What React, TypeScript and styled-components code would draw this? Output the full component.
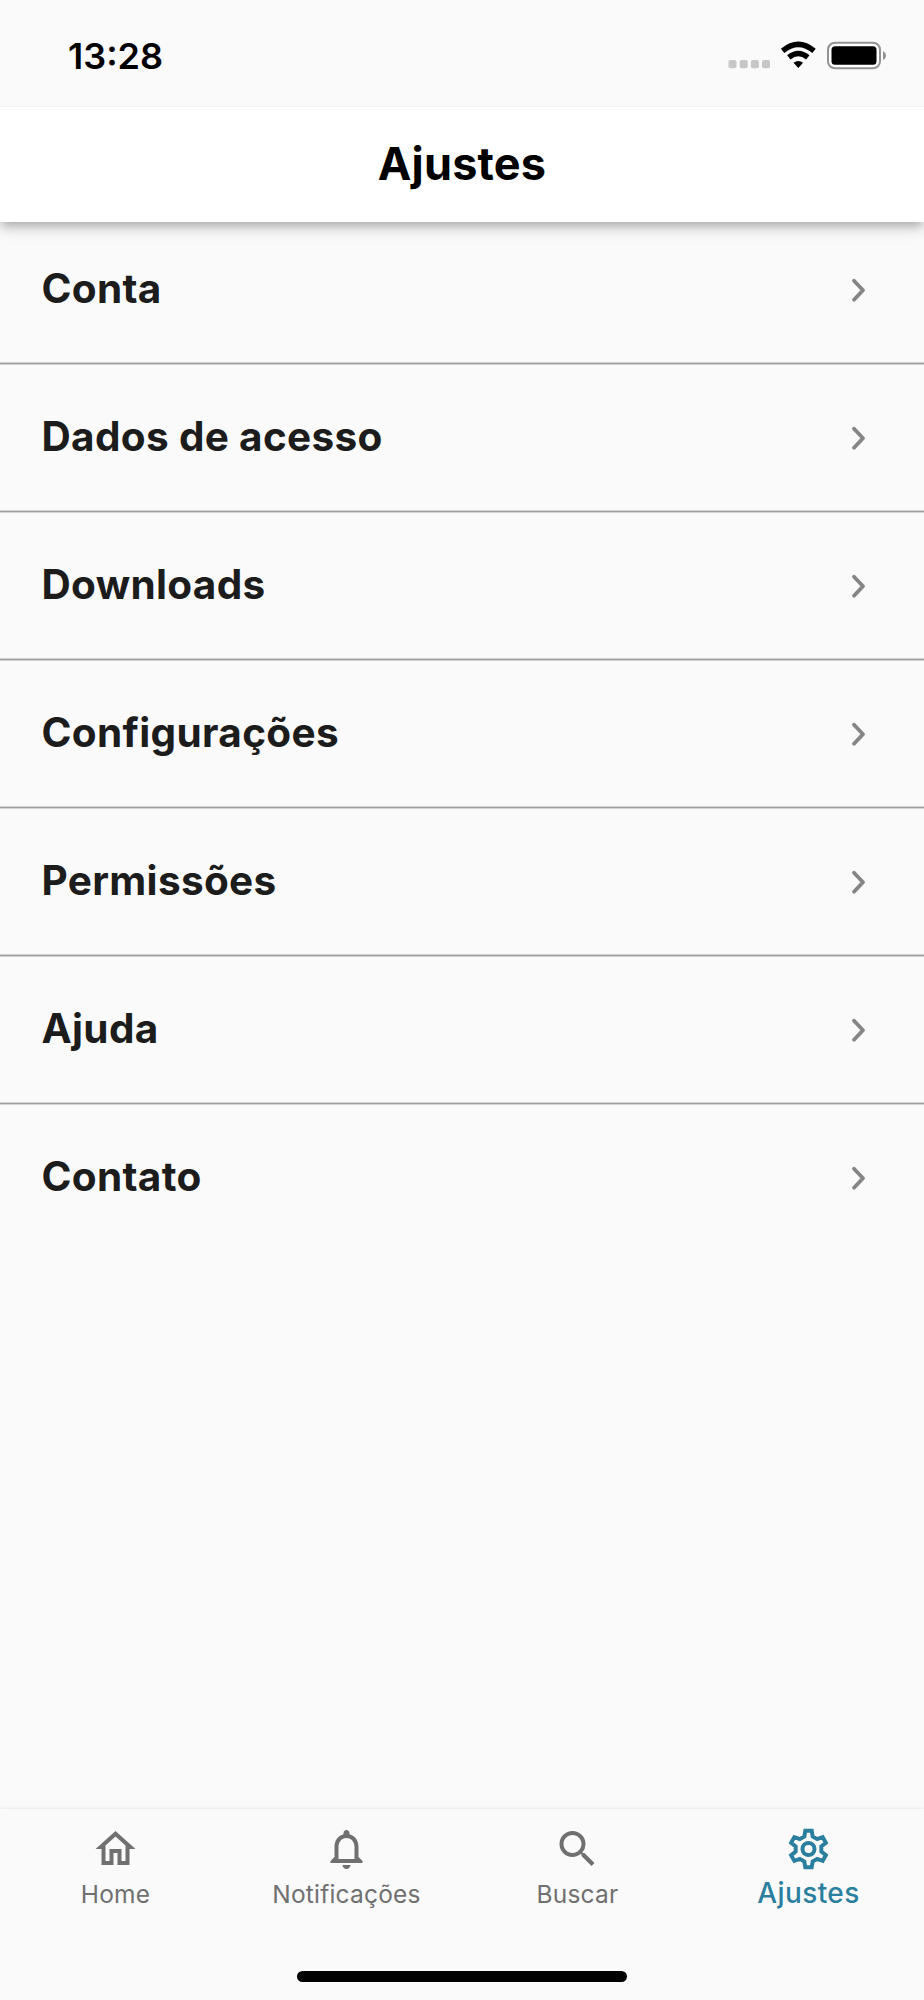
import React from 'react';
import styled, { createGlobalStyle } from 'styled-components';

const GlobalStyle = createGlobalStyle`
  * { box-sizing: border-box; }
  body { margin: 0; background: #fafafa; font-family: Inter, "Liberation Sans", sans-serif; }
`;

const Screen = styled.div`
  display: flex;
  flex-direction: column;
  width: 924px;
  height: 2000px;
  background: #fafafa;
  overflow: hidden;
`;

const StatusBar = styled.div`
  display: flex;
  align-items: center;
  justify-content: space-between;
  height: 107px;
  padding: 6px 38px 0 68px;
  border-bottom: 1px solid #f1f1f1;
`;

const Clock = styled.time`
  font-size: 36px;
  font-weight: 600;
  line-height: 44px;
  color: #000;
`;

const StatusIcons = styled.div`
  display: flex;
  align-items: center;
  padding-top: 1px;
`;

const Header = styled.header`
  position: relative;
  z-index: 1;
  display: flex;
  align-items: center;
  justify-content: center;
  height: 115px;
  padding-bottom: 2px;
  background: #fff;
  box-shadow: 0 5px 9px -2px rgba(0, 0, 0, 0.22), 0 8px 13px rgba(0, 0, 0, 0.13);
  clip-path: inset(0 0 -30px 0);
`;

const Title = styled.h1`
  margin: 0;
  font-size: 45px;
  font-weight: 700;
  line-height: 56px;
  letter-spacing: 0.2px;
  color: #000;
`;

const List = styled.ul`
  flex: 1;
  margin: -5px 0 0;
  padding: 0;
  list-style: none;
`;

const Row = styled.li`
  display: flex;
  align-items: center;
  justify-content: space-between;
  height: 148px;
  padding: 0 54px 3px 41.5px;

  &:not(:last-child) {
    background: linear-gradient(#d4d4d4 1px, #9c9c9c 1px 2px, #d4d4d4 2px) bottom / 100% 3px no-repeat;
  }
`;

const RowLabel = styled.span`
  padding-bottom: 1px;
  font-size: 40.5px;
  font-weight: 700;
  line-height: 50px;
  letter-spacing: 0.33px;
  color: #1c1c1c;
`;

const TabBar = styled.nav`
  display: flex;
  height: 191px;
  background: #fafafa;
  box-shadow: 0 -1px 3px rgba(0, 0, 0, 0.07);
`;

const Tab = styled.div`
  display: flex;
  flex: 1;
  flex-direction: column;
  align-items: center;
  height: 120px;
  padding-top: 16px;
  color: #707070;

  &[aria-current] { color: #2a7f9e; }

  svg { flex: none; }
`;

const TabLabel = styled.span<{ $active?: boolean }>`
  margin-top: ${(p) => (p.$active ? 3 : 4)}px;
  font-size: ${(p) => (p.$active ? 28 : 24.5)}px;
  font-weight: ${(p) => (p.$active ? 450 : 400)};
  line-height: 34px;
  letter-spacing: ${(p) => (p.$active ? 0.4 : 0.2)}px;
`;

const Bottom = styled.div`
  position: relative;
`;

const HomeIndicator = styled.div`
  position: absolute;
  bottom: 18px;
  left: 297px;
  width: 330px;
  height: 11px;
  border-radius: 6px;
  background: #000;
`;

const GLYPHS = {
  home: 'M12 5.69l5 4.5V18h-2v-6H9v6H7v-7.81l5-4.5M12 3L2 12h3v8h6v-6h2v6h6v-8h3L12 3z',
  bell: 'M12 22c1.1 0 2-.9 2-2h-4c0 1.1.9 2 2 2zm6-6v-5c0-3.07-1.63-5.64-4.5-6.32V4c0-.83-.67-1.5-1.5-1.5s-1.5.67-1.5 1.5v.68C7.64 5.36 6 7.92 6 11v5l-2 2v1h16v-1l-2-2zm-2 1H8v-6c0-2.48 1.51-4.5 4-4.5s4 2.02 4 4.5v6z',
  search:
    'M15.5 14h-.79l-.28-.27A6.471 6.471 0 0 0 16 9.5 6.5 6.5 0 1 0 9.5 16c1.61 0 3.09-.59 4.23-1.57l.27.28v.79l5 4.99L20.49 19l-4.99-5zm-6 0C7.01 14 5 11.99 5 9.5S7.01 5 9.5 5 14 7.01 14 9.5 11.99 14 9.5 14z',
};

const TOOTH = [
  [-2.1, -6.2],
  [-1.6, -9.1],
  [1.6, -9.1],
  [2.1, -6.2],
];

// Six copies of one tooth, turned by 60 degrees each, form the cog outline.
const COG_POINTS = [0, 1, 2, 3, 4, 5]
  .flatMap((i) => {
    const a = (i * Math.PI) / 3;
    return TOOTH.map(
      ([x, y]) =>
        `${(12 + x * Math.cos(a) - y * Math.sin(a)).toFixed(2)},${(12 + x * Math.sin(a) + y * Math.cos(a)).toFixed(2)}`
    );
  })
  .join(' ');

const Glyph = ({ name }: { name: keyof typeof GLYPHS }) => (
  <svg width="49" height="48" viewBox="0 0 24 24" fill="currentColor">
    <path d={GLYPHS[name]} />
  </svg>
);

const Cog = () => (
  <svg width="49" height="48" viewBox="0 0 24 24" fill="none" stroke="currentColor" strokeWidth="2">
    <polygon points={COG_POINTS} />
    <circle cx="12" cy="12" r="3" />
  </svg>
);

const Chevron = () => (
  <svg width="24" height="30" viewBox="0 0 24 30" fill="none" stroke="#858585" strokeWidth="3.8" strokeLinecap="round" strokeLinejoin="round">
    <path d="M8 5.7L17 15.2L8 24.7" />
  </svg>
);

const StatusGlyphs = () => (
  <svg width="158" height="34" viewBox="0 0 158 34">
    <g fill="#c7c7c7">
      {[0.5, 11.7, 22.9, 34].map((x) => (
        <rect key={x} x={x} y="20" width="8" height="8.3" rx="2" />
      ))}
    </g>
    <g fill="none" stroke="#000" strokeWidth="5.4">
      <path d="M54.6 10.8Q70.3-2 86 10.8" />
      <path d="M60.8 17.4Q70.3 9.6 79.8 17.4" />
    </g>
    <path d="M65.5 22.8Q70.3 19 75.1 22.8L70.3 28z" fill="#000" />
    <rect x="100" y="2.7" width="52" height="25.6" rx="7" fill="#fff" stroke="#929292" strokeWidth="2" />
    <rect x="103.5" y="6.2" width="45" height="18.6" rx="3.5" fill="#000" />
    <path d="M155 11.2c4 1.4 4 7.4 0 8.8z" fill="#929292" />
  </svg>
);

const ROWS = ['Conta', 'Dados de acesso', 'Downloads', 'Configurações', 'Permissões', 'Ajuda', 'Contato'];

const TABS = [
  { icon: <Glyph name="home" />, label: 'Home' },
  { icon: <Glyph name="bell" />, label: 'Notificações' },
  { icon: <Glyph name="search" />, label: 'Buscar' },
  { icon: <Cog />, label: 'Ajustes', active: true },
];

export default function App() {
  return (
    <Screen>
      <GlobalStyle />
      <StatusBar>
        <Clock>13:28</Clock>
        <StatusIcons>
          <StatusGlyphs />
        </StatusIcons>
      </StatusBar>
      <Header>
        <Title>Ajustes</Title>
      </Header>
      <List>
        {ROWS.map((label) => (
          <Row key={label}>
            <RowLabel>{label}</RowLabel>
            <Chevron />
          </Row>
        ))}
      </List>
      <Bottom>
        <TabBar>
          {TABS.map(({ icon, label, active }) => (
            <Tab key={label} aria-current={active ? 'page' : undefined}>
              {icon}
              <TabLabel $active={active}>{label}</TabLabel>
            </Tab>
          ))}
        </TabBar>
        <HomeIndicator />
      </Bottom>
    </Screen>
  );
}
